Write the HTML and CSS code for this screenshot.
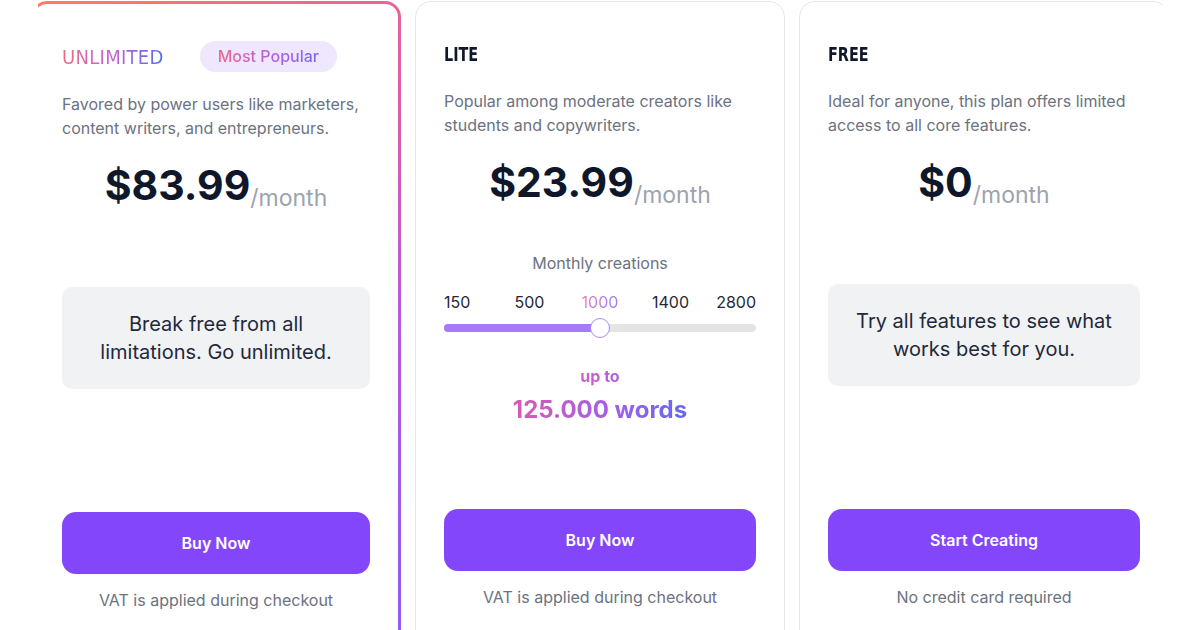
FILE: index.html
```html
<!DOCTYPE html>
<html lang="en">
<head>
<meta charset="UTF-8">
<meta name="viewport" content="width=device-width, initial-scale=1.0">
<title>Pricing</title>
<link rel="stylesheet" href="styles.css">
</head>
<body>

<div class="frame">
  <div class="cards">

    <div class="card featured">
      <div class="head">
        <div class="plan plan-unlimited grad-text">UNLIMITED</div>
        <span class="badge"><span class="grad-text">Most Popular</span></span>
      </div>
      <p class="desc">Favored by power users like marketers, content writers, and entrepreneurs.</p>
      <div class="price">$83.99<span class="per">/month</span></div>
      <div class="note">Break free from all limitations. Go unlimited.</div>
      <div class="bottom">
        <button class="btn">Buy Now</button>
        <div class="small">VAT is applied during checkout</div>
      </div>
    </div>

    <div class="card">
      <div class="head">
        <div class="plan">LITE</div>
      </div>
      <p class="desc">Popular among moderate creators like students and copywriters.</p>
      <div class="price">$23.99<span class="per">/month</span></div>
      <div class="creations">
        <div class="creations-label">Monthly creations</div>
        <div class="steps">
          <span>150</span>
          <span>500</span>
          <span><span class="grad-text step-on">1000</span></span>
          <span>1400</span>
          <span>2800</span>
        </div>
        <div class="slider">
          <div class="track"><div class="fill" style="width: 50%"></div></div>
          <div class="thumb" style="left: 50%"></div>
        </div>
        <div class="upto grad-text">up to</div>
        <div class="words grad-text">125.000 words</div>
      </div>
      <div class="bottom">
        <button class="btn">Buy Now</button>
        <div class="small">VAT is applied during checkout</div>
      </div>
    </div>

    <div class="card">
      <div class="head">
        <div class="plan">FREE</div>
      </div>
      <p class="desc">Ideal for anyone, this plan offers limited access to all core features.</p>
      <div class="price">$0<span class="per">/month</span></div>
      <div class="note">Try all features to see what works best for you.</div>
      <div class="bottom">
        <button class="btn">Start Creating</button>
        <div class="small">No credit card required</div>
      </div>
    </div>

  </div>
</div>

</body>
</html>
```

FILE: styles.css
```css
body, html {
  margin: 0;
  padding: 0;
  background: #fff;
  font-family: 'Inter', 'Noto Sans', sans-serif;
  color: #111827;
}
.frame {
  width: 1125px;
  height: 630px;
  margin-left: 38px;
  overflow: hidden;
}
.cards {
  display: flex;
  gap: 14px;
  margin-left: -7px;
  padding-top: 1px;
}
.card {
  box-sizing: border-box;
  flex: 0 0 370px;
  height: 650px;
  display: flex;
  flex-direction: column;
  padding: 38px 28px 41px;
  border: 1px solid #e5e7eb;
  border-radius: 16px;
  background: #fff;
}
.featured {
  height: 655px;
  border: 3px solid transparent;
  background:
    linear-gradient(#fff, #fff) padding-box,
    linear-gradient(165deg, #fd7e5f 0%, #e6649a 13%, #dc5fa8 24%, #b95ad6 53%, #935af2 93%, #8b5cf6 100%) border-box;
}
.head {
  display: flex;
  align-items: center;
  gap: 36px;
}
.plan {
  font-family: 'DejaVu Sans Condensed', sans-serif;
  font-weight: 700;
  font-size: 20px;
  line-height: 28px;
  color: #0f172a;
  transform: scaleX(0.8);
  transform-origin: left center;
}
.plan-unlimited {
  font-weight: 400;
  letter-spacing: 0.3px;
  transform: none;
  background-image: linear-gradient(90deg, #ef6a86, #c65fd8 50%, #4f6df5);
}
.badge {
  margin: -1px 0;
  height: 31px;
  line-height: 31px;
  padding: 0 18px;
  border-radius: 16px;
  background: #efe7fd;
  font-size: 16px;
  font-weight: 500;
}
.badge .grad-text {
  background-image: linear-gradient(90deg, #ec6a8a, #b25fe6 55%, #7b66f6);
}
.desc {
  margin: 21px 0 0;
  font-size: 16px;
  line-height: 24px;
  color: #6b7280;
}
.price {
  margin-top: 21px;
  text-align: center;
  font-size: 41px;
  line-height: 48px;
  font-weight: 700;
  color: #0f172a;
}
.per {
  font-size: 23px;
  line-height: 0;
  font-weight: 400;
  color: #9ca3af;
  vertical-align: -6px;
}
.note {
  margin-top: 78px;
  padding: 23px 22px;
  border-radius: 10px;
  background: #f1f2f4;
  text-align: center;
  font-size: 20px;
  line-height: 28px;
  color: #1e293b;
}
.creations {
  margin-top: 45px;
  text-align: center;
}
.creations-label {
  font-size: 16px;
  line-height: 24px;
  color: #6b7280;
}
.steps {
  margin-top: 15px;
  display: flex;
  justify-content: space-between;
  font-size: 16px;
  line-height: 24px;
  color: #1f2937;
}
.steps > span {
  width: 30px;
  display: flex;
  justify-content: center;
  white-space: nowrap;
}
.steps > span:first-child {
  justify-content: flex-start;
}
.steps > span:last-child {
  justify-content: flex-end;
}
.slider {
  position: relative;
  height: 20px;
  margin-top: 4px;
  display: flex;
  align-items: center;
}
.track {
  width: 100%;
  height: 8px;
  border-radius: 4px;
  background: #e5e5e5;
  overflow: hidden;
}
.fill {
  height: 100%;
  background: #a67bf8;
}
.thumb {
  position: absolute;
  top: 0;
  box-sizing: border-box;
  width: 20px;
  height: 20px;
  margin-left: -10px;
  border-radius: 50%;
  border: 1.5px solid #ad88f9;
  background: #fff;
}
.upto, .words {
  width: fit-content;
  margin-left: auto;
  margin-right: auto;
  font-weight: 700;
}
.upto {
  margin-top: 27px;
  font-size: 16px;
  line-height: 22px;
}
.words {
  margin-top: 8px;
  font-size: 24px;
  line-height: 30px;
}
.bottom {
  margin-top: auto;
}
.btn {
  display: block;
  width: 100%;
  height: 62px;
  border: none;
  border-radius: 14px;
  background: #8446fa;
  color: #fff;
  font-family: 'Inter', sans-serif;
  font-size: 16px;
  font-weight: 600;
}
.small {
  margin-top: 14px;
  text-align: center;
  font-size: 16px;
  line-height: 24px;
  color: #6b7280;
}

/* gradient text, kept last so it wins over the colours above */
.grad-text {
  background-clip: text;
  -webkit-background-clip: text;
  color: transparent;
}
.step-on {
  background-image: linear-gradient(90deg, #e57cbc, #9c7ef2);
}
.upto {
  background-image: linear-gradient(90deg, #d25dc0, #b15ce0);
}
.words {
  background-image: linear-gradient(90deg, #d85bb5, #a35fe6 55%, #6368f2);
}
```
